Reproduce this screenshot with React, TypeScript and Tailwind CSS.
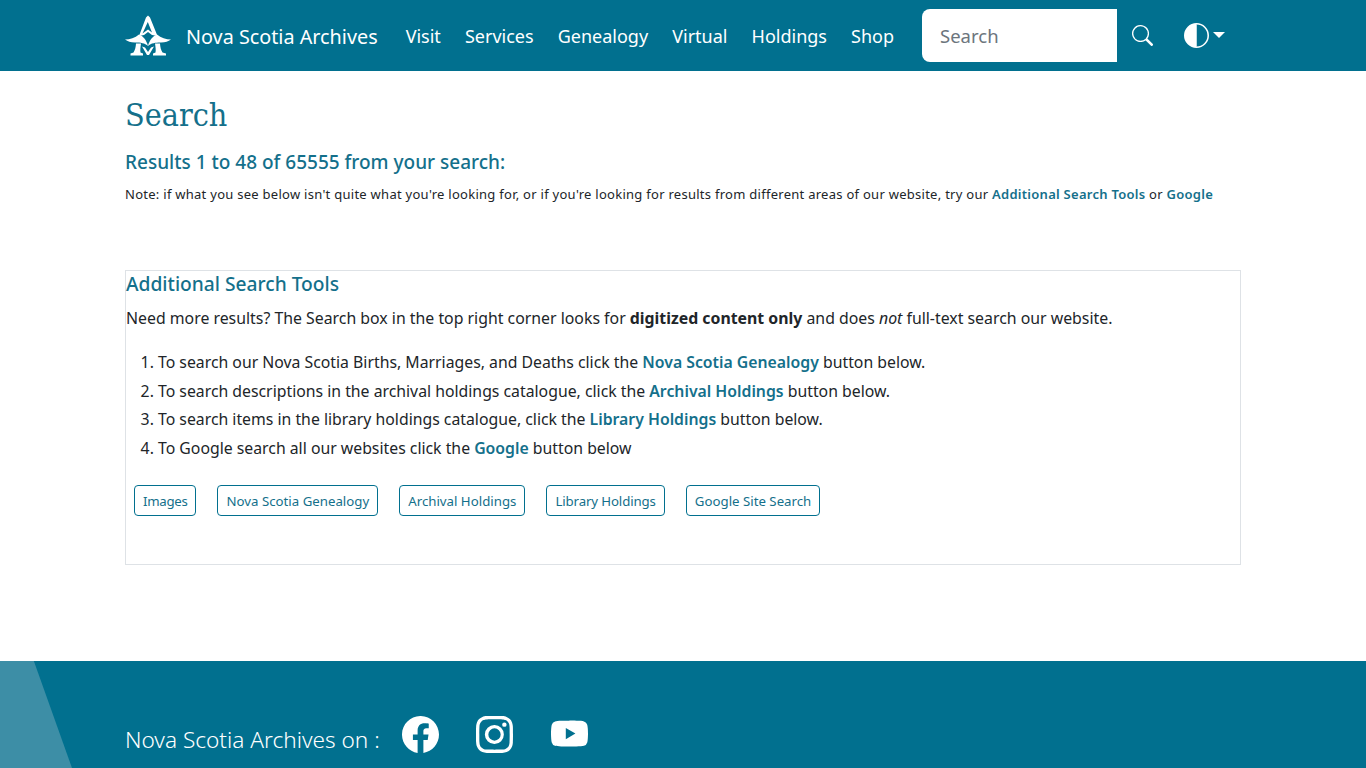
import React from "react";

const Logo = () => (
  <svg width="46" height="44" viewBox="0 0 46 44" fill="#fff" aria-hidden="true">
    <path d="M23 1.500 L25 3.500 L32.500 22 L27 21 L23 18 L19 21 L14 22 L21 3.500 Z M22.800 8 L17.500 19.500 L23 15.500 L27 18.500 Z" fillRule="evenodd" />
    <path d="M0 25.500 C5 25.500 10 24 14 20.500 C18 22 21.500 26 23 32 C20 29 15 28.500 11 28.500 C6 28.700 3 27.500 0 25.500 Z" />
    <path d="M46 25.500 C41 25.500 36 24 32 20.500 C28 22 24.500 26 23 32 C26 29 31 28.500 35 28.500 C40 28.700 43 27.500 46 25.500 Z" />
    <path d="M11 29.500 L16 29.500 C15.500 33 15 36 15.500 38.500 L18 39.500 L18 41.500 L5.500 41.500 L5.500 39.500 L8.500 38.500 C10 36 10.800 33 11 29.500 Z" />
    <path d="M35 29.500 L30 29.500 C30.500 33 31 36 30.500 38.500 L28 39.500 L28 41.500 L41 41.500 L41 39.500 L37.500 38.500 C36 36 35.200 33 35 29.500 Z" />
    <path d="M17 32.500 L20 33.500 L23 38 L26 33.500 L29 32.500 L24 41 L22 41 Z" />
  </svg>
);

const FB = () => (
  <svg width="37" height="37" viewBox="0 0 16 16" fill="#fff" aria-hidden="true">
    <path d="M16 8.049c0-4.446-3.582-8.05-8-8.05C3.580 0-.002 3.603-.002 8.050c0 4.017 2.926 7.347 6.750 7.951v-5.625h-2.030V8.050H6.750V6.275c0-2.017 1.195-3.131 3.022-3.131.876 0 1.791.157 1.791.157v1.980h-1.009c-.993 0-1.303.621-1.303 1.258v1.510h2.218l-.354 2.326H9.250V16c3.824-.604 6.750-3.934 6.750-7.951" />
  </svg>
);

const IG = () => (
  <svg width="37" height="37" viewBox="0 0 16 16" fill="#fff" aria-hidden="true">
    <path d="M8 0C5.829 0 5.556.01 4.703.048 3.850.088 3.269.222 2.760.420a3.900 3.900 0 0 0-1.417.923A3.900 3.900 0 0 0 .420 2.760C.222 3.268.087 3.850.048 4.700.010 5.555 0 5.827 0 8.001c0 2.172.010 2.444.048 3.297.040.852.174 1.433.372 1.942.205.526.478.972.923 1.417.444.445.89.719 1.416.923.510.198 1.090.333 1.942.372C5.555 15.990 5.827 16 8 16s2.444-.010 3.298-.048c.851-.040 1.434-.174 1.943-.372a3.900 3.900 0 0 0 1.416-.923c.445-.445.718-.891.923-1.417.197-.509.332-1.090.372-1.942C15.990 10.445 16 10.173 16 8s-.010-2.445-.048-3.299c-.040-.851-.175-1.433-.372-1.941a3.900 3.900 0 0 0-.923-1.417A3.900 3.900 0 0 0 13.240.420c-.510-.198-1.092-.333-1.943-.372C10.443.010 10.172 0 7.998 0zm-.717 1.442h.718c2.136 0 2.389.007 3.232.046.780.035 1.204.166 1.486.275.373.145.640.319.920.599s.453.546.598.920c.110.281.240.705.275 1.485.039.843.047 1.096.047 3.231s-.008 2.389-.047 3.232c-.035.780-.166 1.203-.275 1.485a2.500 2.500 0 0 1-.599.919c-.280.280-.546.453-.92.598-.280.110-.704.240-1.485.276-.843.038-1.096.047-3.232.047s-2.390-.009-3.233-.047c-.780-.036-1.203-.166-1.485-.276a2.500 2.500 0 0 1-.920-.598 2.500 2.500 0 0 1-.600-.920c-.109-.281-.240-.705-.275-1.485-.038-.843-.046-1.096-.046-3.233s.008-2.388.046-3.231c.036-.780.166-1.204.276-1.486.145-.373.319-.640.599-.920s.546-.453.920-.598c.282-.110.705-.240 1.485-.276.738-.034 1.024-.044 2.515-.045zm4.988 1.328a.960.960 0 1 0 0 1.920.960.960 0 0 0 0-1.920m-4.270 1.122a4.109 4.109 0 1 0 0 8.217 4.109 4.109 0 0 0 0-8.217m0 1.441a2.667 2.667 0 1 1 0 5.334 2.667 2.667 0 0 1 0-5.334" />
  </svg>
);

const YT = () => (
  <svg width="37" height="37" viewBox="0 0 16 16" fill="#fff" aria-hidden="true">
    <path d="M8.051 1.999h.089c.822.003 4.987.033 6.110.335a2.010 2.010 0 0 1 1.415 1.420c.101.380.172.883.220 1.402l.010.104.022.260.008.104c.065.914.073 1.770.074 1.957v.075c-.001.194-.010 1.108-.082 2.060l-.008.105-.009.104c-.050.572-.124 1.140-.235 1.558a2.010 2.010 0 0 1-1.415 1.420c-1.160.312-5.569.334-6.180.335h-.142c-.309 0-1.587-.006-2.927-.052l-.170-.006-.087-.004-.171-.007-.171-.007c-1.110-.049-2.167-.128-2.654-.260a2.010 2.010 0 0 1-1.415-1.419c-.111-.417-.185-.986-.235-1.558L.090 9.820l-.008-.104A31 31 0 0 1 0 7.680v-.123c.002-.215.010-.958.064-1.778l.007-.103.003-.052.008-.104.022-.260.010-.104c.048-.519.119-1.023.220-1.402a2.010 2.010 0 0 1 1.415-1.420c.487-.130 1.544-.210 2.654-.260l.170-.007.172-.006.086-.003.171-.007A100 100 0 0 1 7.858 2zM6.400 5.209v4.818l4.157-2.408z" />
  </svg>
);

const Link = ({ children }: { children: React.ReactNode }) => (
  <a className="font-semibold text-[#14708b]">{children}</a>
);

const Btn = ({ children, className = "" }: { children: React.ReactNode; className?: string }) => (
  <a className={`h-[31px] flex items-center px-[8px] pt-[2px] border border-[#01708f] rounded-[4px] text-[13.250px] text-[#14708b] whitespace-nowrap ${className}`}>{children}</a>
);

const navItems = ["Visit", "Services", "Genealogy", "Virtual", "Holdings", "Shop"];

export default function App() {
  return (
    <div className="h-screen overflow-hidden flex flex-col bg-white text-[#212529] font-['Noto_Sans','Open_Sans',sans-serif]">
      <header className="h-[71px] shrink-0 bg-[#01708f] pl-[125px] flex items-center text-white">
        <Logo />
        <span className="ml-[15px] text-[19.800px] pt-[2px] whitespace-nowrap">Nova Scotia Archives</span>
        <nav className="ml-[28px] flex gap-[24.100px] text-[18px] pt-[1px]">
          {navItems.map((n) => (
            <a key={n}>{n}</a>
          ))}
        </nav>
        <div className="ml-[28px] w-[195px] h-[53px] bg-white rounded-l-[8px] flex items-center pl-[18px] pt-[1px] text-[18.500px] text-[#6c757d]">
          Search
        </div>
        <svg className="ml-[15px]" width="21" height="21" viewBox="0 0 16 16" fill="#fff" aria-hidden="true">
          <path d="M11.742 10.344a6.500 6.500 0 1 0-1.397 1.398h-.001q.044.060.098.115l3.850 3.850a1 1 0 0 0 1.415-1.414l-3.850-3.850a1 1 0 0 0-.115-.100zM12 6.500a5.500 5.500 0 1 1-11 0 5.500 5.500 0 0 1 11 0" />
        </svg>
        <svg className="ml-[31px]" width="25" height="25" viewBox="0 0 16 16" fill="#fff" aria-hidden="true">
          <path d="M8 15A7 7 0 1 0 8 1zm0 1A8 8 0 1 1 8 0a8 8 0 0 1 0 16" />
          <path d="M8 1a7 7 0 0 0 0 14z" />
        </svg>
        <span className="ml-[4px] mb-[2px] w-0 h-0 border-x-[6px] border-x-transparent border-t-[6px] border-t-white" />
      </header>

      <main className="flex-1 px-[125px]">
        <h1 className="mt-[21px] text-[32px] leading-[46px] text-[#14708b] font-['DejaVu_Serif_Condensed','DejaVu_Serif',serif]">Search</h1>
        <h2 className="mt-[11px] text-[19px] leading-[26px] font-medium text-[#14708b]">Results 1 to 48 of 65555 from your search:</h2>
        <p className="mt-[9px] text-[13px] tracking-[0.270px] leading-[20px] whitespace-nowrap">
          Note: if what you see below isn't quite what you're looking for, or if you're looking for results from different areas of our website, try our <Link>Additional Search Tools</Link> or <Link>Google</Link>
        </p>
        <section className="mt-[66px] h-[295px] border border-[#dee2e6]">
          <h3 className="text-[19.200px] leading-[26px] font-medium text-[#14708b]">Additional Search Tools</h3>
          <p className="mt-[9px] text-[15.850px] leading-[24px]">
            Need more results? The Search box in the top right corner looks for <b>digitized content only</b> and does <i>not</i> full-text search our website.
          </p>
          <ol className="mt-[18px] pl-[32px] list-decimal text-[15.800px] leading-[28.500px]">
            <li>To search our Nova Scotia Births, Marriages, and Deaths click the <Link>Nova Scotia Genealogy</Link> button below.</li>
            <li>To search descriptions in the archival holdings catalogue, click the <Link>Archival Holdings</Link> button below.</li>
            <li>To search items in the library holdings catalogue, click the <Link>Library Holdings</Link> button below.</li>
            <li>To Google search all our websites click the <Link>Google</Link> button below</li>
          </ol>
          <div className="mt-[23px] ml-[8px] flex gap-[21px]">
            <Btn className="tracking-[-0.300px]">Images</Btn>
            <Btn>Nova Scotia Genealogy</Btn>
            <Btn>Archival Holdings</Btn>
            <Btn className="tracking-[-0.120px]">Library Holdings</Btn>
            <Btn>Google Site Search</Btn>
          </div>
        </section>
      </main>

      <footer className="relative h-[107px] shrink-0 bg-[#01708f] text-white">
        <div className="absolute left-0 top-0 h-full w-[72px] bg-[#3d8ea6] [clip-path:polygon(0_0,47%_0,100%_100%,0_100%)]" />
        <div className="relative ml-[125px] mt-[55px] flex items-start">
          <span className="mt-[9px] text-[22.600px] leading-[30px] font-light">Nova Scotia Archives on :</span>
          <div className="ml-[22px] flex gap-[37.500px]">
            <FB />
            <IG />
            <YT />
          </div>
        </div>
      </footer>
    </div>
  );
}
